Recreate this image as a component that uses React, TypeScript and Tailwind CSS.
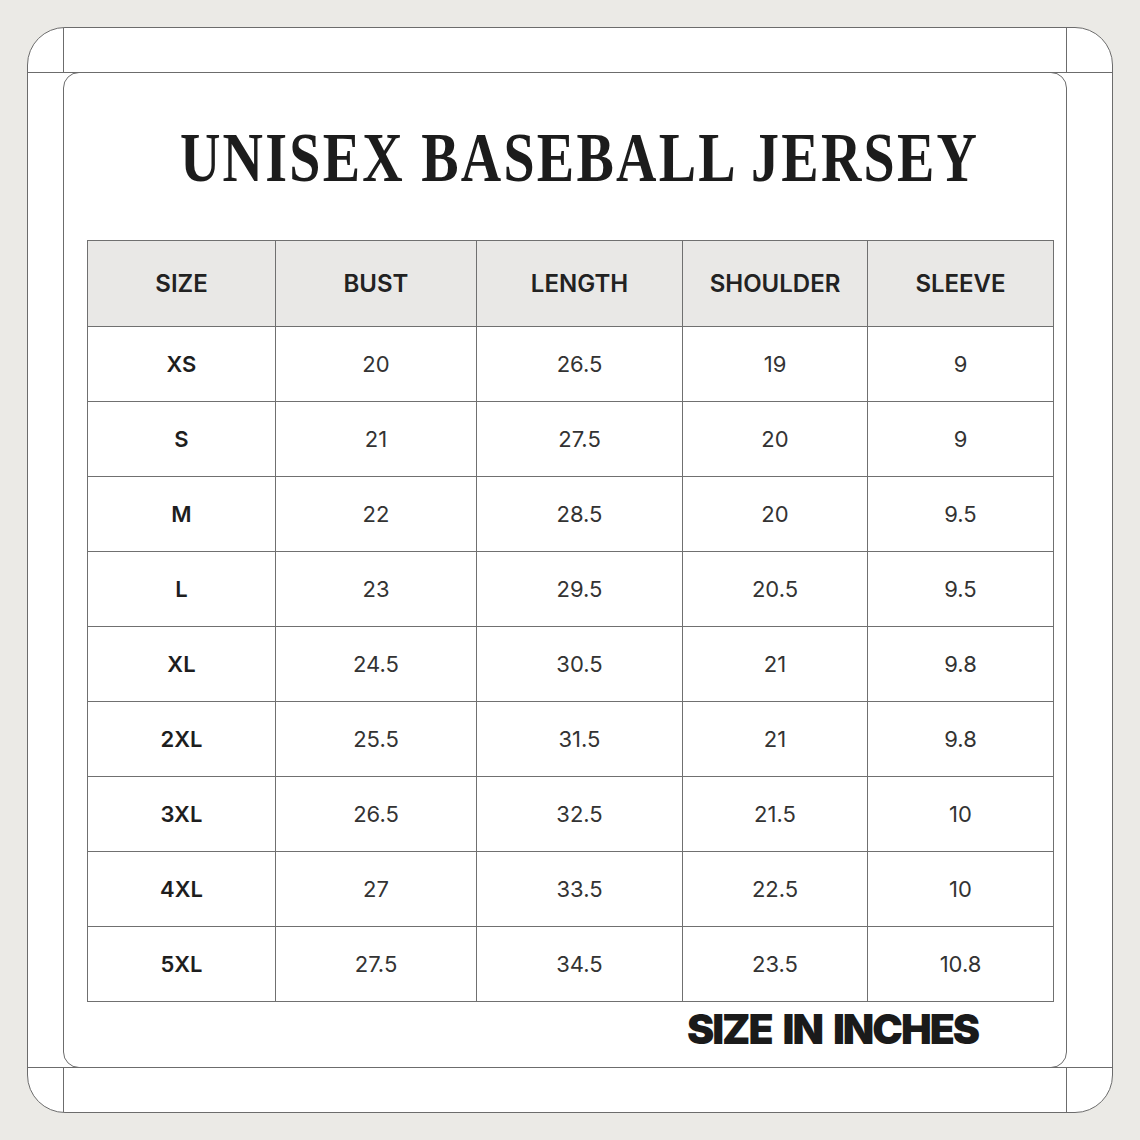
import React from "react";

const headers = ["SIZE", "BUST", "LENGTH", "SHOULDER", "SLEEVE"];
const rows: string[][] = [
  ["XS", "20", "26.5", "19", "9"],
  ["S", "21", "27.5", "20", "9"],
  ["M", "22", "28.5", "20", "9.5"],
  ["L", "23", "29.5", "20.5", "9.5"],
  ["XL", "24.5", "30.5", "21", "9.8"],
  ["2XL", "25.5", "31.5", "21", "9.8"],
  ["3XL", "26.5", "32.5", "21.5", "10"],
  ["4XL", "27", "33.5", "22.5", "10"],
  ["5XL", "27.5", "34.5", "23.5", "10.8"],
];

export default function App() {
  return (
    <div className="w-[1140px] h-[1140px] bg-[#ebeae6] p-[27px]">
      <div className="relative w-[1086px] h-[1086px] bg-white border border-[#6c6c6c] rounded-[38px]">
        {/* decorative frame lines */}
        <div className="absolute top-0 h-[45px] left-[35px] w-px bg-[#6c6c6c]" />
        <div className="absolute bottom-0 h-[45px] left-[35px] w-px bg-[#6c6c6c]" />
        <div className="absolute top-0 h-[45px] left-[1038px] w-px bg-[#6c6c6c]" />
        <div className="absolute bottom-0 h-[45px] left-[1038px] w-px bg-[#6c6c6c]" />
        <div className="absolute left-0 right-0 top-[44px] h-px bg-[#6c6c6c]" />
        <div className="absolute left-0 right-0 top-[1039px] h-px bg-[#6c6c6c]" />

        <div className="ml-[35px] mt-[44px] w-[1004px] h-[996px] border border-[#6c6c6c] rounded-[16px] bg-white flex flex-col pt-[50px]">
          <div className="h-[70px] flex justify-center pl-[30px]">
            <h1
              className="text-[70px] leading-none font-bold text-[#1c1c1c] whitespace-nowrap scale-x-[0.8] tracking-[0.04em]"
              style={{ fontFamily: '"Liberation Serif", "DejaVu Serif", serif' }}
            >
              UNISEX BASEBALL JERSEY
            </h1>
          </div>

          <div
            className="ml-[23px] mt-[47px] w-[967px] border-l border-t border-[#707070] grid grid-cols-[188px_201px_206px_185px_186px]"
            style={{ fontFamily: 'Inter, "Liberation Sans", sans-serif' }}
          >
            {headers.map((h) => (
              <div
                key={h}
                className="h-[86px] bg-[#e9e8e6] border-r border-b border-[#707070] flex items-center justify-center text-[24px] font-semibold text-[#222]"
              >
                {h}
              </div>
            ))}
            {rows.map((r) =>
              r.map((c, i) => (
                <div
                  key={r[0] + i}
                  className={
                    i === 0
                      ? "h-[75px] border-r border-b border-[#707070] flex items-center justify-center text-[22px] font-semibold text-[#1e1e1e]"
                      : "h-[75px] border-r border-b border-[#707070] flex items-center justify-center text-[22px] font-normal text-[#333]"
                  }
                >
                  {c}
                </div>
              ))
            )}
          </div>

          <div className="flex justify-end pr-[88px] mt-[7px]">
            <span
              className="text-[41px] leading-none font-black text-[#1a1a1a] tracking-[-0.05em] [word-spacing:0.12em] whitespace-nowrap"
              style={{ fontFamily: 'Inter, "Liberation Sans", sans-serif' }}
            >
              SIZE IN INCHES
            </span>
          </div>
        </div>
      </div>
    </div>
  );
}
